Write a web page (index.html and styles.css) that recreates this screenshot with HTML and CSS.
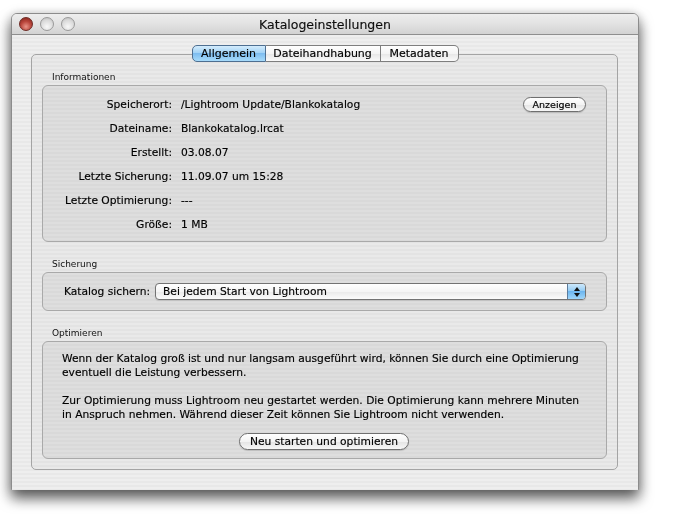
FILE: index.html
```html
<!DOCTYPE html>
<html lang="de">
<head>
<meta charset="utf-8">
<title>Katalogeinstellungen</title>
<link rel="stylesheet" href="styles.css">
</head>
<body>
<div class="desk">
<div class="window">
  <div class="titlebar">
    <div class="lights">
      <span class="light close"></span>
      <span class="light off"></span>
      <span class="light off"></span>
    </div>
    <div class="title">Katalogeinstellungen</div>
  </div>
  <div class="content">
    <div class="tabs">
      <span class="tab selected">Allgemein</span>
      <span class="tab">Dateihandhabung</span>
      <span class="tab last">Metadaten</span>
    </div>
    <div class="tabbox">
      <div class="section-label">Informationen</div>
      <div class="group info">
        <div class="info-grid">
          <div class="k">Speicherort:</div>
          <div class="v v-loc"><span>/Lightroom Update/Blankokatalog</span><span class="btn small">Anzeigen</span></div>
          <div class="k">Dateiname:</div>
          <div class="v">Blankokatalog.lrcat</div>
          <div class="k">Erstellt:</div>
          <div class="v">03.08.07</div>
          <div class="k">Letzte Sicherung:</div>
          <div class="v">11.09.07 um 15:28</div>
          <div class="k">Letzte Optimierung:</div>
          <div class="v">---</div>
          <div class="k">Größe:</div>
          <div class="v">1 MB</div>
        </div>
      </div>
      <div class="section-label gap">Sicherung</div>
      <div class="group backup">
        <span class="backup-label">Katalog sichern:</span>
        <div class="popup">
          <span class="popup-text">Bei jedem Start von Lightroom</span>
          <span class="popup-arrows">
            <svg width="8" height="12" viewBox="0 0 8 12"><path d="M4 1 L7 5 L1 5 Z" fill="#111"/><path d="M4 11 L7 7 L1 7 Z" fill="#111"/></svg>
          </span>
        </div>
      </div>
      <div class="section-label gap">Optimieren</div>
      <div class="group optimize">
        <p class="text">Wenn der Katalog groß ist und nur langsam ausgeführt wird, können Sie durch eine Optimierung<br>eventuell die Leistung verbessern.</p>
        <p class="text">Zur Optimierung muss Lightroom neu gestartet werden. Die Optimierung kann mehrere Minuten<br>in Anspruch nehmen. Während dieser Zeit können Sie Lightroom nicht verwenden.</p>
        <div class="btn-row"><span class="btn">Neu starten und optimieren</span></div>
      </div>
    </div>
  </div>
</div>
</div>
</body>
</html>
```
FILE: styles.css
```css
* { box-sizing: border-box; }
html, body { margin: 0; padding: 0; background: #fff; }
body {
  font-family: "DejaVu Sans", "Liberation Sans", sans-serif;
  font-size: 10.7px;
  color: #000;
  -webkit-text-stroke: 0.15px #000;
}
.desk {
  padding: 13px 0 30px 11px;
}
.window {
  width: 628px;
  height: 477px;
  border: 1px solid #8c8c8c;
  border-radius: 6px 6px 0 0;
  display: flex;
  flex-direction: column;
  background: #ececec;
  filter: drop-shadow(0 8px 7px rgba(0,0,0,0.62)) drop-shadow(0 0 5px rgba(0,0,0,0.15));
}
.titlebar {
  height: 21px;
  flex: none;
  background: linear-gradient(to bottom, #eeeeee 0%, #e2e2e2 50%, #d2d2d2 100%);
  border-bottom: 1px solid #8e8e8e;
  border-radius: 5px 5px 0 0;
  display: flex;
  align-items: center;
  position: relative;
}
.lights {
  display: flex;
  gap: 7px;
  padding-left: 7px;
}
.light {
  width: 14px;
  height: 14px;
  border-radius: 50%;
  display: block;
}
.light.close {
  background: radial-gradient(circle at 50% 72%, #e89488 0%, #b9453b 50%, #7e2018 100%);
  border: 1px solid #6e2a24;
}
.light.off {
  background: radial-gradient(circle at 50% 72%, #f8f8f8 0%, #dadada 60%, #b8b8b8 100%);
  border: 1px solid #9a9a9a;
}
.title {
  position: absolute;
  left: 0; right: 0; top: 0; bottom: 0;
  display: flex;
  align-items: center;
  justify-content: center;
  font-size: 12.5px;
  color: #111;
}
.content {
  flex: 1;
  padding: 10px 20px 20px 19px;
  background: repeating-linear-gradient(to bottom, #eeeeee 0 2px, #e8e8e8 2px 4px);
  display: flex;
  flex-direction: column;
}
.tabs {
  align-self: center;
  display: flex;
  height: 17px;
  position: relative;
  z-index: 2;
  margin-bottom: -8px;
  margin-left: 1px;
}
.tab {
  display: flex;
  align-items: center;
  justify-content: center;
  height: 17px;
  padding: 0 10px;
  background: linear-gradient(to bottom, #ffffff 0%, #f4f4f4 50%, #e6e6e6 51%, #fafafa 100%);
  border: 1px solid #7e7e7e;
  border-left: none;
  font-size: 11px;
}
.tab:first-child { border-left: 1px solid #6e8ca8; border-radius: 5px 0 0 5px; }
.tab.last { border-radius: 0 5px 5px 0; }
.tab.selected {
  width: 74px;
  background: linear-gradient(to bottom, #d4ecfc 0%, #a3d3f6 45%, #7ebdf0 50%, #a7dbfb 100%);
  border-color: #4e6f91;
}
.tab:nth-child(2) { width: 115px; }
.tab.last { width: 78px; }
.tabbox {
  flex: 1;
  border: 1px solid #a4a4a4;
  border-radius: 5px;
  background: repeating-linear-gradient(to bottom, #e9e9e9 0 2px, #e3e3e3 2px 4px);
  padding: 16px 10px 10px 10px;
  display: flex;
  flex-direction: column;
}
.section-label {
  font-size: 9px;
  height: 14px;
  line-height: 12px;
  padding-left: 10px;
  color: #111;
  -webkit-text-stroke: 0;
}
.section-label.gap { margin-top: 16px; }
.group {
  border: 1px solid #a9a9a9;
  border-radius: 6px;
  background: repeating-linear-gradient(to bottom, #dedede 0 2px, #d9d9d9 2px 4px);
}
.info { height: 157px; padding: 6px 20px 0 0; }
.info-grid {
  display: grid;
  grid-template-columns: 129px 1fr;
  grid-auto-rows: 24px;
  column-gap: 9px;
  align-items: center;
}
.k { text-align: right; white-space: nowrap; }
.v { white-space: nowrap; }
.v-loc { display: flex; justify-content: space-between; align-items: center; }
.btn {
  display: inline-flex;
  align-items: center;
  justify-content: center;
  height: 17px;
  padding: 0 10px;
  border: 1px solid #6f6f6f;
  border-radius: 9px;
  background: linear-gradient(to bottom, #ffffff 0%, #f3f3f3 50%, #e4e4e4 51%, #f7f7f7 100%);
  box-shadow: 0 1px 1px rgba(0,0,0,0.15);
  white-space: nowrap;
}
.btn.small {
  height: 15px;
  width: 63px;
  padding: 0;
  font-size: 9.5px;
  border-radius: 8px;
}
.backup {
  height: 39px;
  display: flex;
  align-items: center;
  padding: 0 20px 0 21px;
}
.backup-label { width: 91px; white-space: nowrap; }
.popup {
  flex: 1;
  height: 17px;
  display: flex;
  border: 1px solid #737373;
  border-radius: 4px;
  overflow: hidden;
  background: linear-gradient(to bottom, #ffffff 0%, #f5f5f5 50%, #e9e9e9 51%, #fbfbfb 100%);
  box-shadow: 0 1px 1px rgba(0,0,0,0.12);
}
.popup-text { flex: 1; padding-left: 7px; display: flex; align-items: center; }
.popup-arrows {
  width: 18px;
  display: flex;
  align-items: center;
  justify-content: center;
  border-left: 1px solid #5c7c9c;
  background: linear-gradient(to bottom, #cde8fb 0%, #96cdf4 45%, #6db6ef 50%, #9fd6fa 100%);
}
.optimize {
  height: 118px;
  padding: 10px 20px 10px 19px;
}
.text { margin: 0 0 14px 0; line-height: 14px; white-space: nowrap; }
.text:last-of-type { margin-bottom: 0; }
.btn-row { display: flex; justify-content: center; margin-top: 11px; }
.btn-row .btn { width: 170px; padding: 0; }
```
